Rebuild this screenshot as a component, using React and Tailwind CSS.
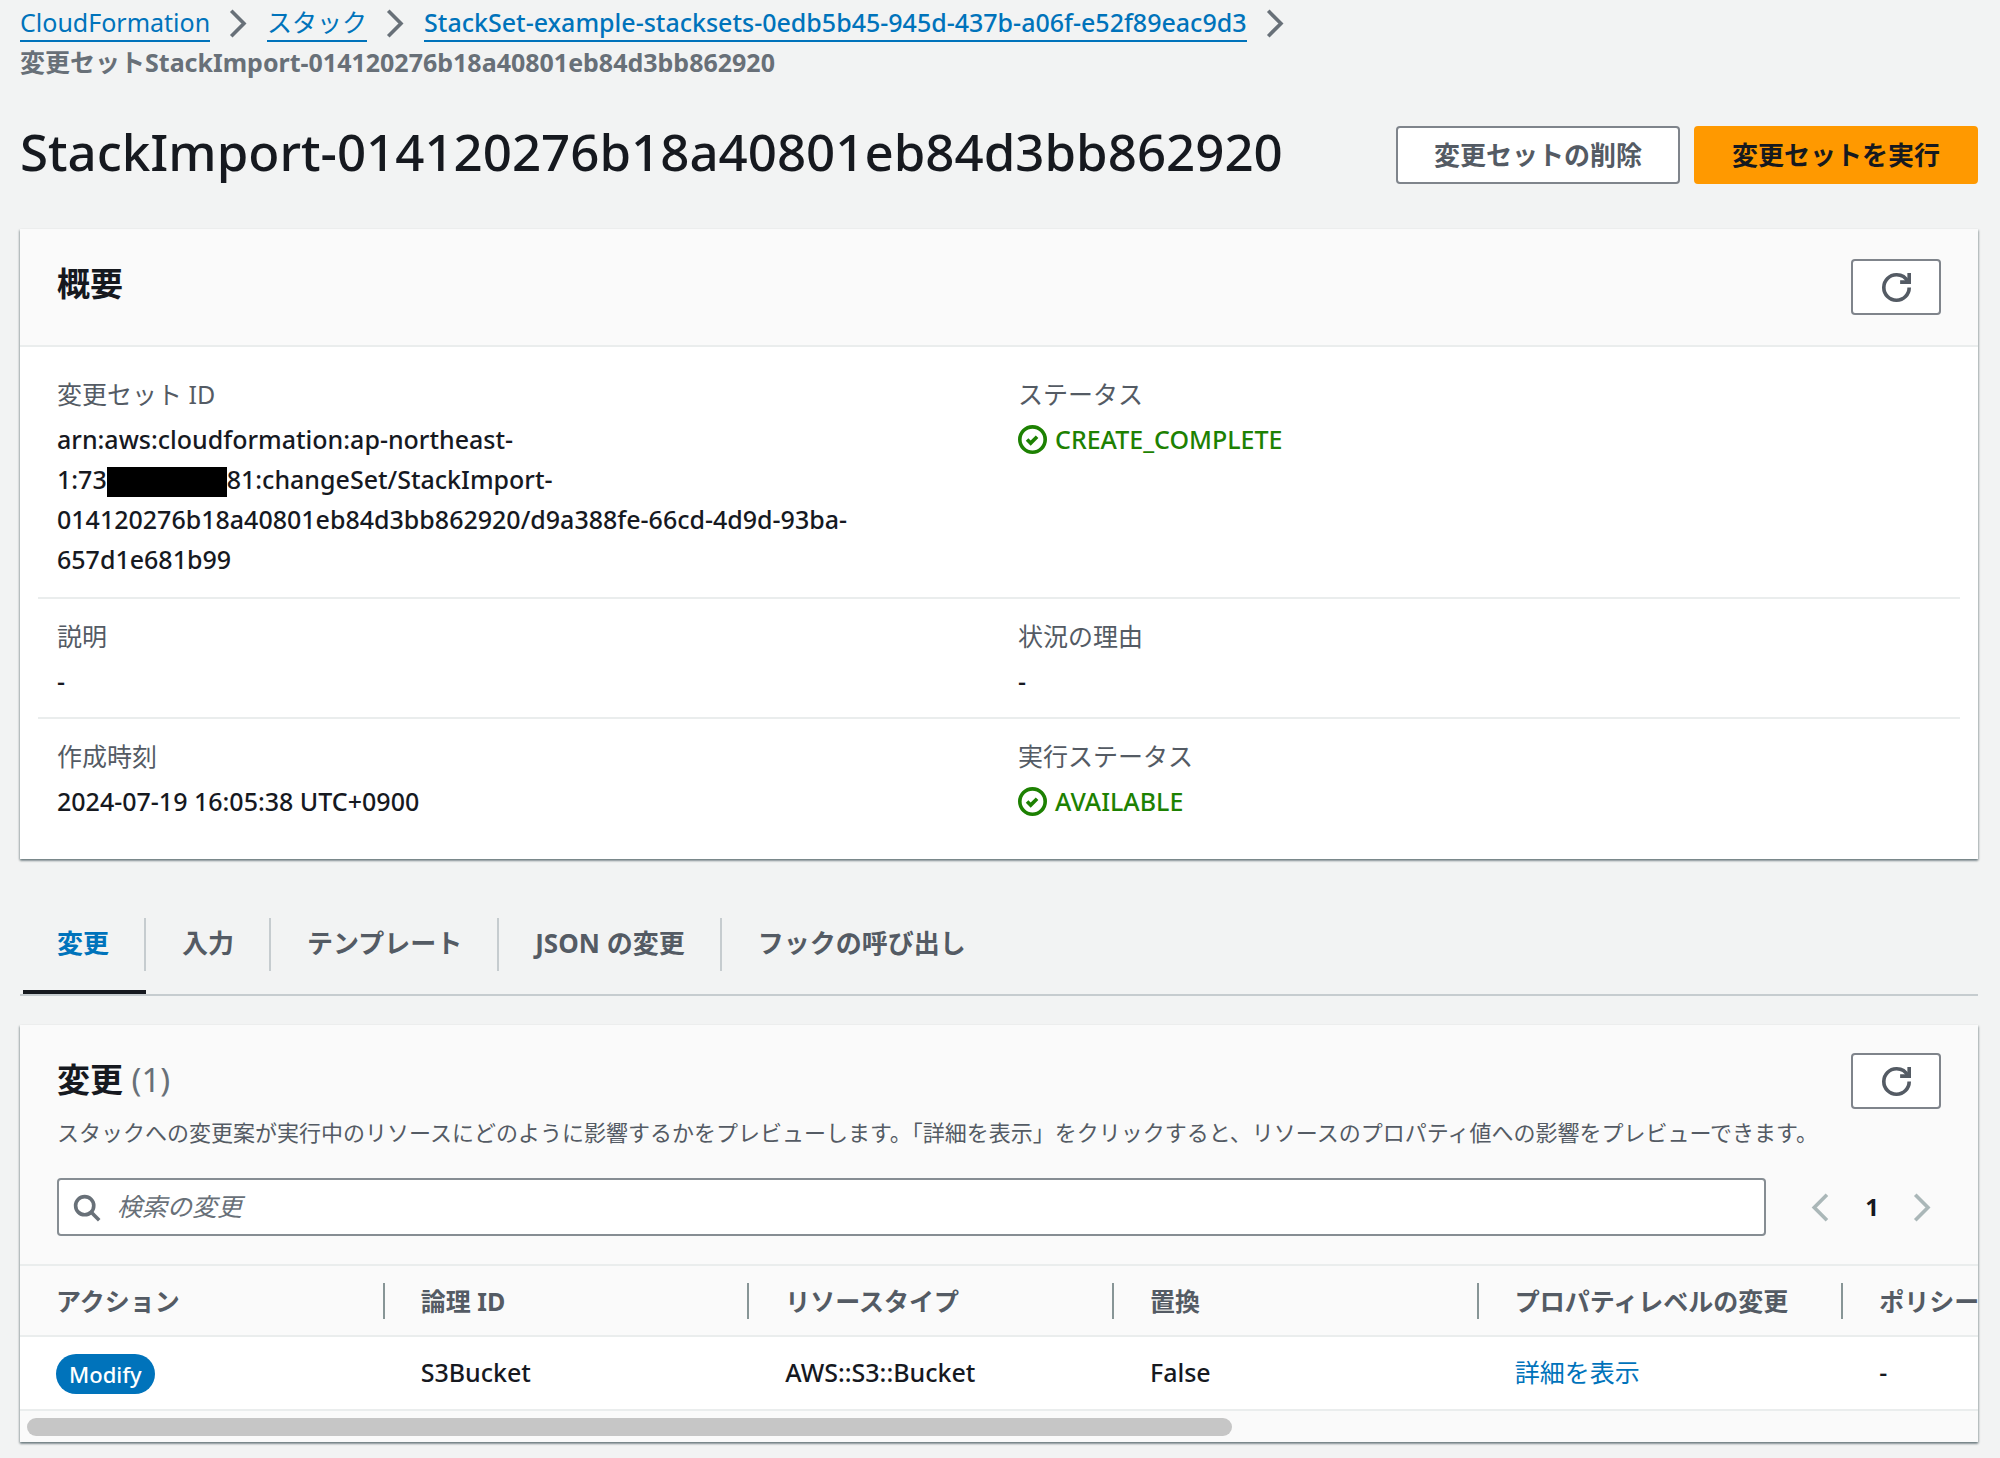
const tabs = ['変更', '入力', 'テンプレート', 'JSON の変更', 'フックの呼び出し'];

const columns = ['アクション', '論理 ID', 'リソースタイプ', '置換', 'プロパティレベルの変更', 'ポリシーアクション'];

function Icon({ children, className = '' }) {
  return (
    <svg
      viewBox="0 0 16 16"
      fill="none"
      stroke="currentColor"
      strokeWidth="2"
      aria-hidden="true"
      className={`size-[29px] shrink-0 ${className}`}
    >
      {children}
    </svg>
  );
}

function ChevronRight({ className }) {
  return (
    <Icon className={className}>
      <path d="M4 1l7 7-7 7" />
    </Icon>
  );
}

function RefreshButton() {
  return (
    <button
      type="button"
      aria-label="更新"
      className="flex h-14 w-[90px] shrink-0 items-center justify-center rounded-[4px] border-2 border-[#545b64]/75 bg-white text-[#545b64]"
    >
      <Icon>
        <path d="M10 5h5V0" />
        <path d="M15 8a6.957 6.957 0 0 1-7 7 6.957 6.957 0 0 1-7-7 6.957 6.957 0 0 1 7-7 6.87 6.87 0 0 1 6.3 4" />
      </Icon>
    </button>
  );
}

function Crumb({ children, className = '' }) {
  return (
    <li className="flex h-10 items-center">
      <a href="#" className={`border-b-2 border-[#0073bb] leading-9 text-[#0073bb] ${className}`}>
        {children}
      </a>
      <ChevronRight className="mx-[14px] text-[#687078]" />
    </li>
  );
}

function Field({ label, children }) {
  return (
    <div className="px-[19px]">
      <dt className="mb-1 leading-[42px] text-[#545b64]">{label}</dt>
      <dd className="leading-10 font-medium">{children}</dd>
    </div>
  );
}

function Status({ children }) {
  return (
    <span className="flex items-center gap-2 text-[#1d8102]">
      <Icon>
        <circle cx="8" cy="8" r="7" />
        <path d="M5 8l2 2 3.521-3.521" />
      </Icon>
      {children}
    </span>
  );
}

function Panel({ children }) {
  return (
    <section className="bg-white shadow-[0_2px_2px_0_rgba(0,28,36,0.35),1px_1px_2px_0_rgba(0,28,36,0.2),-1px_1px_2px_0_rgba(0,28,36,0.2)]">
      {children}
    </section>
  );
}

export default function App() {
  return (
    <div
      lang="ja"
      className="min-h-screen bg-[#f2f3f3] pr-[22px] pb-4 pl-5 font-['Noto_Sans','Noto_Sans_CJK_JP',sans-serif] text-[25px] text-[#16191f]"
    >
      <nav aria-label="パンくずリスト" className="pt-[3px]">
        <ol className="flex flex-wrap">
          <Crumb>CloudFormation</Crumb>
          <Crumb>スタック</Crumb>
          <Crumb className="font-medium">StackSet-example-stacksets-0edb5b45-945d-437b-a06f-e52f89eac9d3</Crumb>
          <li className="leading-[38px] font-bold text-[#687078]">
            変更セットStackImport-014120276b18a40801eb84d3bb862920
          </li>
        </ol>
      </nav>

      <header className="mt-9 flex items-center justify-between">
        <h1 className="pb-2 text-[51px] leading-[68px] font-medium">StackImport-014120276b18a40801eb84d3bb862920</h1>
        <div className="flex gap-[14px]">
          <button
            type="button"
            className="h-[58px] rounded-[4px] border-2 border-[#545b64]/75 bg-white px-9 text-[26px] font-bold text-[#545b64]"
          >
            変更セットの削除
          </button>
          <button
            type="button"
            className="h-[58px] rounded-[4px] border-2 border-[#ff9900] bg-[#ff9900] px-9 text-[26px] font-bold text-[#16191f]"
          >
            変更セットを実行
          </button>
        </div>
      </header>

      <main className="mt-9">
        <Panel>
          <div className="flex items-start justify-between border-b-2 border-[#eaeded] bg-[#fafafa] px-[37px] py-[30px]">
            <h2 className="text-[33px] leading-[50px] font-bold">概要</h2>
            <RefreshButton />
          </div>
          <dl className="px-[18px] pt-[26px] pb-9">
            <div className="grid grid-cols-2 border-b-2 border-[#eaeded] pb-[18px]">
              <Field label="変更セット ID">
                arn:aws:cloudformation:ap-northeast-
                <br />
                1:73
                <span className="inline-block h-[30px] w-[120px] bg-black align-middle" />
                81:changeSet/StackImport-
                <br />
                014120276b18a40801eb84d3bb862920/d9a388fe-66cd-4d9d-93ba-
                <br />
                657d1e681b99
              </Field>
              <Field label="ステータス">
                <Status>CREATE_COMPLETE</Status>
              </Field>
            </div>
            <div className="grid grid-cols-2 border-b-2 border-[#eaeded] pt-4 pb-4">
              <Field label="説明">-</Field>
              <Field label="状況の理由">-</Field>
            </div>
            <div className="grid grid-cols-2 pt-4 pb-[2px]">
              <Field label="作成時刻">2024-07-19 16:05:38 UTC+0900</Field>
              <Field label="実行ステータス">
                <Status>AVAILABLE</Status>
              </Field>
            </div>
          </dl>
        </Panel>

        <div role="tablist" className="mt-[59px] flex border-b-2 border-[#c6cccf] pl-[3px]">
          {tabs.map((tab, i) => (
            <button
              key={tab}
              type="button"
              role="tab"
              aria-selected={i === 0}
              className={`border-b-4 text-[26px] font-bold ${i === 0 ? 'border-[#16191f] text-[#0073bb]' : 'border-transparent text-[#545b64]'}`}
            >
              <span
                className={`mb-[19px] block h-[53px] leading-[50px] ${i === 0 ? 'pr-[35px] pl-[34px]' : 'pr-[35px] pl-9'} ${i < tabs.length - 1 ? 'border-r-2 border-[#c6cccf]' : ''}`}
              >
                {tab}
              </span>
            </button>
          ))}
        </div>

        <div className="mt-[29px]">
          <Panel>
            <div className="bg-[#fafafa] pt-7 pb-7 pl-[37px]">
              <div className="flex items-start justify-between pr-[37px]">
                <div>
                  <h2 className="text-[33px] leading-[54px] font-bold">
                    変更 <span className="font-normal text-[#687078]">(1)</span>
                  </h2>
                  <p className="text-[22px] leading-[50px] text-[#545b64]">
                    スタックへの変更案が実行中のリソースにどのように影響するかをプレビューします。「詳細を表示」をクリックすると、リソースのプロパティ値への影響をプレビューできます。
                  </p>
                </div>
                <RefreshButton />
              </div>
              <div className="mt-[21px] flex items-center pr-[41px]">
                <label className="flex h-[58px] flex-1 items-center gap-4 rounded-[4px] border-2 border-[#687078]/80 bg-white px-[13px] text-[#687078]">
                  <Icon>
                    <circle cx="7" cy="7" r="5" />
                    <path d="M15 15l-4.5-4.5" />
                  </Icon>
                  <input
                    type="text"
                    aria-label="検索の変更"
                    placeholder="検索の変更"
                    className="min-w-0 flex-1 bg-transparent outline-none placeholder:text-[#687078] placeholder:italic"
                  />
                </label>
                <div className="ml-[41px] flex items-center text-[#aab7b8]">
                  <button type="button" aria-label="前のページ">
                    <Icon>
                      <path d="M11 1L4 8l7 7" />
                    </Icon>
                  </button>
                  <button type="button" className="mx-[14px] w-[44px] text-[24px] font-bold text-[#16191f]">
                    1
                  </button>
                  <button type="button" aria-label="次のページ">
                    <ChevronRight />
                  </button>
                </div>
              </div>
            </div>

            <div className="overflow-x-hidden">
              <table className="w-[2188px] table-fixed border-collapse text-left">
                <thead>
                  <tr className="border-y-2 border-[#eaeded] bg-[#fafafa] text-[#545b64]">
                    {columns.map((column) => (
                      <th key={column} scope="col" className="h-[71px] p-0 font-bold whitespace-nowrap">
                        <div className="border-r-2 border-[#879596] pl-9 leading-9">{column}</div>
                      </th>
                    ))}
                  </tr>
                </thead>
                <tbody>
                  <tr className="border-b-2 border-[#eaeded] font-medium">
                    <td className="h-[74px] pl-9">
                      <span className="inline-block rounded-full bg-[#0073bb] px-[13px] align-middle text-[22px] leading-10 text-white">
                        Modify
                      </span>
                    </td>
                    <td className="pl-9">S3Bucket</td>
                    <td className="pl-9">AWS::S3::Bucket</td>
                    <td className="pl-9">False</td>
                    <td className="pl-9">
                      <a href="#" className="font-normal text-[#0073bb]">
                        詳細を表示
                      </a>
                    </td>
                    <td className="pl-9">-</td>
                  </tr>
                </tbody>
              </table>
            </div>
            <div className="bg-[#fafafa] px-[7px] pt-[7px] pb-[6px]">
              <div className="h-[18px] w-[62%] rounded-full bg-[#c6c6c6]" />
            </div>
          </Panel>
        </div>
      </main>
    </div>
  );
}
